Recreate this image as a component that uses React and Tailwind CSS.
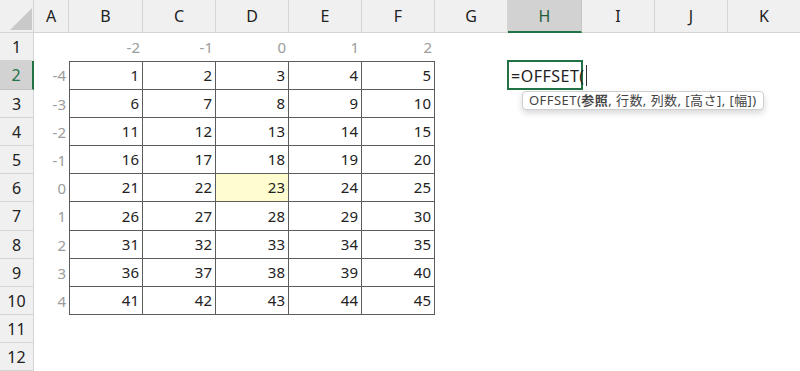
import React from "react";

const letters = ["A", "B", "C", "D", "E", "F", "G", "H", "I", "J", "K"];

function HeaderCell({ label, selected }) {
  return (
    <div
      className={
        selected
          ? "flex items-center justify-center bg-[#d2d2d2] border-r border-r-[#c4c4c4] border-b-2 border-b-[#217346] text-[#1e5e3a] text-[16px]"
          : "flex items-center justify-center bg-[#f0f0f0] border-r border-r-[#d4d4d4] border-b border-b-[#d4d4d4] text-[#222] text-[16px]"
      }
    >
      {label}
    </div>
  );
}

function RowHeader({ n, selected }) {
  return (
    <div
      className={
        selected
          ? "flex items-center justify-center bg-[#d2d2d2] border-b border-b-[#c4c4c4] border-r-2 border-r-[#217346] text-[#217346] text-[16px]"
          : "flex items-center justify-center bg-[#f0f0f0] border-b border-b-[#d4d4d4] border-r border-r-[#d4d4d4] text-[#222] text-[16px]"
      }
    >
      {n}
    </div>
  );
}

function TableCell({ value, first, top, highlight }) {
  let cls =
    "flex items-center justify-end pr-[3px] text-[15px] text-[#222] border-r border-b border-[#5c5c5c]";
  if (first) cls += " border-l";
  if (top) cls += " border-t";
  cls += highlight ? " bg-[#fffdd0]" : " bg-white";
  return <div className={cls}>{value}</div>;
}

function GrayCell({ value }) {
  return (
    <div className="flex items-center justify-end pr-[3px] text-[15px] text-[#9c9c9c] bg-white">
      {value}
    </div>
  );
}

function Empty() {
  return <div className="bg-white" />;
}

function ActiveCell() {
  return (
    <div className="relative bg-white">
      <div className="absolute left-[-1px] top-[-1px] right-[-1px] bottom-0 border-2 border-[#217346] z-10" />
      <div className="absolute left-[3px] top-0 bottom-0 flex items-center whitespace-nowrap text-[16px] tracking-[0.5px] text-[#222] z-20">
        <span>=OFFSET(</span>
        <span className="ml-[1px] inline-block w-px h-[21px] bg-[#333]" />
      </div>
      <div className="absolute left-[14px] top-[30px] z-30 whitespace-nowrap rounded-[4px] border border-[#cfcfcf] bg-white px-[6px] h-[19px] flex items-center text-[13px] tracking-[0.45px] text-[#444] shadow-[0_3px_6px_rgba(0,0,0,0.16)]">
        OFFSET(<span className="font-bold">参照</span>, 行数, 列数, [高さ], [幅])
      </div>
    </div>
  );
}

export default function App() {
  const cells = [];
  cells.push(
    <div key="corner" className="relative bg-[#f0f0f0] border-r border-b border-[#d4d4d4]">
      <svg className="absolute left-0 top-0" width="34" height="33" viewBox="0 0 34 33">
        <polygon points="10,30 32,30 32,8" fill="#c9c9c9" />
      </svg>
    </div>
  );
  letters.forEach((l) => {
    cells.push(<HeaderCell key={"h" + l} label={l} selected={l === "H"} />);
  });
  for (let r = 1; r <= 12; r++) {
    cells.push(<RowHeader key={"r" + r} n={r} selected={r === 2} />);
    for (let c = 0; c < 11; c++) {
      const key = r + "-" + c;
      if (r === 1) {
        if (c >= 1 && c <= 5) cells.push(<GrayCell key={key} value={c - 3} />);
        else cells.push(<Empty key={key} />);
      } else if (r >= 2 && r <= 10) {
        if (c === 0) cells.push(<GrayCell key={key} value={r - 6} />);
        else if (c >= 1 && c <= 5)
          cells.push(
            <TableCell
              key={key}
              value={(r - 2) * 5 + c}
              first={c === 1}
              top={r === 2}
              highlight={r === 6 && c === 3}
            />
          );
        else if (r === 2 && c === 7) cells.push(<ActiveCell key={key} />);
        else cells.push(<Empty key={key} />);
      } else {
        cells.push(<Empty key={key} />);
      }
    }
  }

  return (
    <div className="w-[800px] h-[371px] overflow-hidden bg-white font-['Noto_Sans','Noto_Sans_CJK_JP',sans-serif]">
      <div className="grid grid-cols-[34px_35px_74px_73px_73px_73px_73px_73px_74px_73px_73px_73px] grid-rows-[33px_28px_29px_28px_28px_28px_28px_29px_28px_28px_28px_28px_28px] w-[801px]">
        {cells}
      </div>
    </div>
  );
}
